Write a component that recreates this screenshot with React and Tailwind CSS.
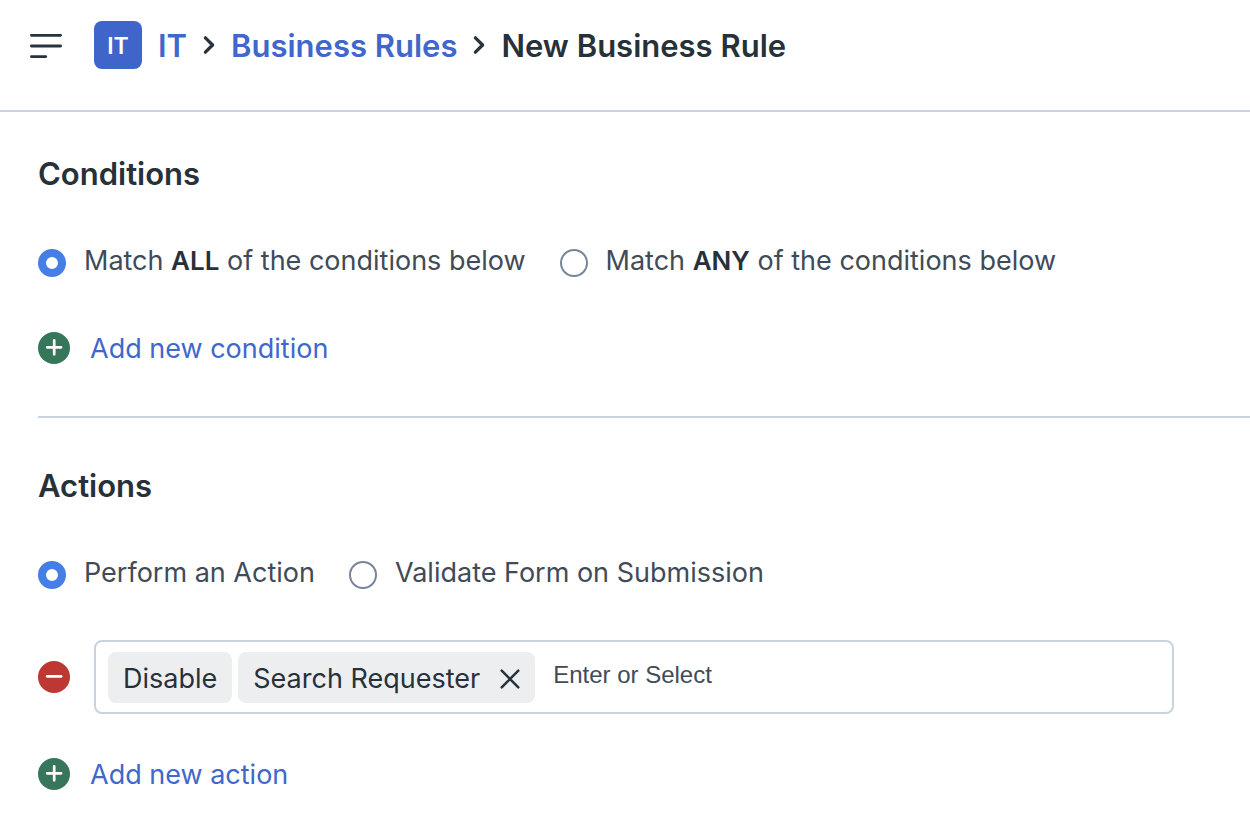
function Chevron() {
  return (
    <svg className="h-5 w-3 shrink-0" viewBox="0 0 12 20" fill="none" stroke="#2b343d" strokeWidth="3.3" strokeLinecap="round" strokeLinejoin="round" aria-hidden="true">
      <path d="M2.4 2.8 9.6 10 2.4 17.2" />
    </svg>
  );
}

function Radio({ name, label, defaultChecked }) {
  return (
    <label className="flex items-center gap-[18px] text-[27px] leading-[38px] text-[#414b57]">
      <input
        type="radio"
        name={name}
        defaultChecked={defaultChecked}
        className="mt-1 size-7 shrink-0 appearance-none rounded-full border-2 border-[#76859a] bg-white checked:border-8 checked:border-[#457ee5]"
      />
      <span>{label}</span>
    </label>
  );
}

function Strong({ children }) {
  return <strong className="text-[26px] font-semibold text-[#27313a]">{children}</strong>;
}

function CircleIcon({ minus }) {
  return (
    <svg className="size-8 shrink-0" viewBox="0 0 32 32" aria-hidden="true">
      <circle cx="16" cy="16" r="16" fill={minus ? "#bd3832" : "#36775c"} />
      <path d={minus ? "M9.2 15.3h13.9" : "M9.2 15.3h13.9M16.2 8.4v13.9"} stroke="#fff" strokeWidth="2.7" strokeLinecap="round" />
    </svg>
  );
}

function AddButton({ children }) {
  return (
    <button type="button" className="flex items-center gap-5 text-[27px] leading-[34px] text-[#3f67cc]">
      <CircleIcon />
      <span className="pt-0.5">{children}</span>
    </button>
  );
}

export default function App() {
  return (
    <div className="min-h-screen bg-white font-['Inter',sans-serif] text-[#27313a]">
      <header className="flex h-28 items-start border-b-2 border-[#c9d3dd] pt-[21px] pl-[30px]">
        <button type="button" aria-label="Menu" className="mt-2 mr-8">
          <svg className="h-8 w-8" viewBox="0 0 32 32" fill="none" stroke="#27343c" strokeWidth="2.8" strokeLinecap="round">
            <path d="M1.4 6.3h29.2M1.4 17h29.2M1.4 27.6h14.4" />
          </svg>
        </button>
        <nav aria-label="Breadcrumb" className="flex h-12 items-center text-[31px] leading-10 font-semibold">
          <span className="mr-4 flex size-12 items-center justify-center rounded-lg bg-[#3f65ca] pt-0.5 text-[23px] font-semibold text-white">IT</span>
          <a href="#it" className="mr-4 pt-0.5 text-[#3f67cc]">IT</a>
          <Chevron />
          <a href="#rules" className="mx-4 pt-0.5 text-[#3f67cc]">Business Rules</a>
          <Chevron />
          <h1 className="ml-4 pt-0.5">New Business Rule</h1>
        </nav>
      </header>
      <main className="pl-[38px]">
        <section className="border-b-2 border-[#c9d3dd] pt-[42px] pb-[50px]">
          <h2 className="text-[31px] leading-10 font-semibold">Conditions</h2>
          <div className="mt-12 flex flex-wrap gap-[34px]">
            <Radio name="match" defaultChecked label={<>Match <Strong>ALL</Strong> of the conditions below</>} />
            <Radio name="match" label={<>Match <Strong>ANY</Strong> of the conditions below</>} />
          </div>
          <div className="mt-[50px]"><AddButton>Add new condition</AddButton></div>
        </section>
        <section className="pt-12 pr-[76px]">
          <h2 className="text-[31px] leading-10 font-semibold">Actions</h2>
          <div className="mt-12 flex flex-wrap gap-[34px]">
            <Radio name="type" defaultChecked label="Perform an Action" />
            <Radio name="type" label="Validate Form on Submission" />
          </div>
          <div className="mt-12 flex items-center gap-6">
            <button type="button" aria-label="Remove action"><CircleIcon minus /></button>
            <div className="flex min-w-0 flex-1 items-start gap-1.5 rounded-lg border-2 border-[#c9d3dd] px-3 pt-2.5 pb-[9px]">
              <span className="rounded-lg bg-[#edeef0] px-[15px] pt-[9px] pb-1.5 text-[27px] leading-9">Disable</span>
              <span className="flex items-center gap-5 rounded-lg bg-[#edeef0] px-[15px] pt-[9px] pb-1.5 text-[27px] leading-9">
                Search Requester
                <button type="button" aria-label="Remove Search Requester">
                  <svg className="size-5" viewBox="0 0 20 20" stroke="#27313a" strokeWidth="2.5" strokeLinecap="round"><path d="M1.7 1.7 18.3 18.3M18.3 1.7 1.7 18.3" /></svg>
                </button>
              </span>
              <input aria-label="Action" placeholder="Enter or Select" className="ml-3 h-[46px] min-w-0 flex-1 font-['Liberation_Sans',sans-serif] text-2xl outline-none placeholder:text-[#414b57]" />
            </div>
          </div>
          <div className="mt-[42px]"><AddButton>Add new action</AddButton></div>
        </section>
      </main>
    </div>
  );
}
